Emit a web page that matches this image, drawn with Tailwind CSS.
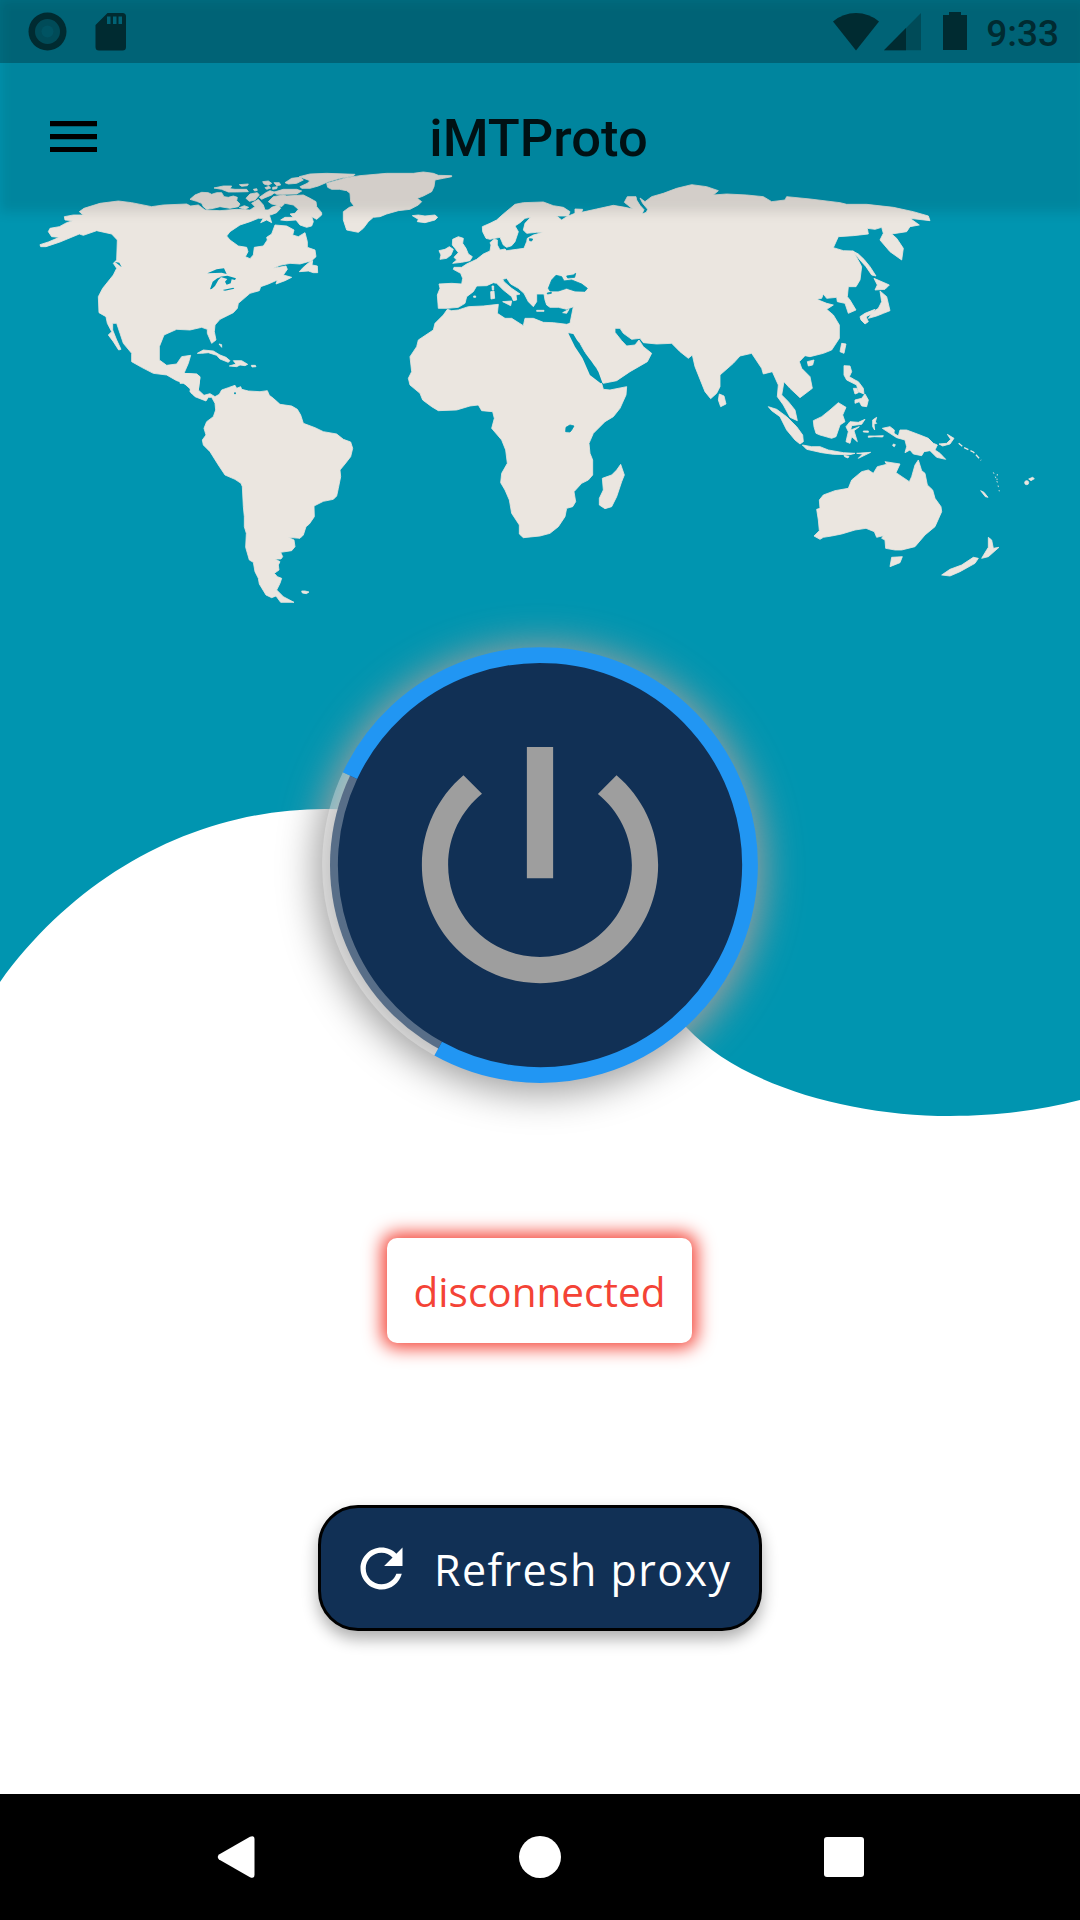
<!DOCTYPE html>
<html lang="en">
<head>
<meta charset="utf-8">
<title>iMTProto</title>
<script src="https://cdn.jsdelivr.net/npm/@tailwindcss/browser@4"></script>
</head>
<body>
<div class="relative isolate flex h-[1920px] w-[1080px] flex-col overflow-hidden bg-white">

  <!-- Backdrop: teal wave and world map -->
  <svg class="absolute inset-0 -z-10" width="1080" height="1920" viewBox="0 0 1080 1920">
    <path fill="#0095b0" d="M0 0H1080V1100C1040 1110 1000 1116 950 1116C850 1116 740 1085 687 1028C560 890 520 809 325 809C200 809 80 871 0 982Z"/>
    <g fill="#ebe6e0" stroke="#ebe6e0" stroke-width="2.500" stroke-linejoin="round">
      <!-- North America -->
      <g transform="translate(20 160) scale(.33333)">
        <path d="M60 254L85 246 118 232 95 230 85 215 90 205 118 200 140 188 158 182 135 180 133 170 160 165 190 165 178 155 192 145 240 130 295 123 335 128 395 140 430 135 500 132 512 138 535 135 555 150 600 152 650 148 690 150 705 140 695 130 715 118 730 135 735 150 755 150 748 165 755 188 740 180 722 188 730 175 715 175 690 185 660 195 630 215 620 228 630 240 655 258 680 262 684 275 676 290 690 296 700 285 703 262 730 258 742 240 740 232 755 222 765 195 800 198 822 210 818 225 835 230 855 218 862 245 862 262 885 270 888 290 875 302 840 312 810 310 780 316 760 325 798 318 802 328 790 345 815 352 795 362 768 372 772 360 745 372 722 380 718 392 690 400 655 430 652 445 640 458 600 478 585 495 583 515 588 540 575 550 562 520 562 508 545 502 510 510 470 508 432 525 418 560 418 600 440 616 470 612 485 590 512 586 505 610 492 640 530 643 540 652 535 690 515 700 512 688 490 668 470 662 440 645 400 640 365 622 335 605 335 580 310 550 300 520 290 490 278 490 278 510 290 540 303 568 296 570 280 545 265 525 275 515 262 490 258 470 237 458 235 410 248 385 280 345 290 325 280 310 290 300 292 240 275 222 230 212 190 226 178 222 120 246 78 260 62 260Z"/>
        <path d="M510 118L525 105 545 97 565 98 575 103 590 98 605 98 612 110 625 112 640 108 652 112 650 122 660 132 655 140 630 145 600 140 580 145 560 148 550 140 545 130 530 124Z"/>
        <path d="M582 84L610 78 635 78 630 86 645 88 680 88 685 95 650 96 625 96 605 88ZM658 74L685 72 682 77 665 79ZM678 115L690 102 712 98 718 105 705 120 688 124ZM728 65L745 63 755 70 745 76 732 72ZM762 68L778 68 782 75 770 77ZM700 88l10-2 2 5-8 2ZM735 83l12-4 5 5-12 4ZM758 82l14-2-2 6-12 2ZM718 112L738 98 750 92 765 97 755 105 735 113 725 118Z"/>
        <path d="M795 68L815 55 840 52 850 60 830 70 805 72ZM760 97L790 88 830 88 845 93 830 102 790 103 770 103ZM838 50L870 42 920 40 1005 43 1000 48 960 55 925 65 895 78 870 85 845 85 840 80 862 70 870 62Z"/>
        <path d="M745 125L760 110 790 105 800 108 850 105 870 115 888 125 890 140 905 158 905 165 890 178 875 170 880 185 875 198 860 202 840 195 828 180 800 182 782 180 795 172 820 172 810 162 825 160 835 148 820 135 795 130 785 140 770 135 755 132ZM740 155L755 142 775 135 782 145 770 158 752 165ZM658 143l15-6 13 5-10 6Z"/>
        <path d="M838 335L850 322 870 305 878 302 876 315 892 318 893 338 880 338 865 333Z"/>
        <path d="M532 580L550 570 580 573 600 585 618 592 630 602 625 607 600 597 590 586 565 578 545 580ZM640 602L665 602 683 613 675 617 660 615 650 620 628 618 648 612ZM694 616l12 0 2 4-12 1ZM597 552l8 2 0 8Z"/>
        <path fill="#0095b0" stroke="none" d="M562 340L590 328 612 325 620 342 605 338ZM570 388L578 365 592 355 605 350 595 360 585 378 575 387ZM600 350L622 347 648 355 645 360 635 358 632 370 620 374 615 365 622 357ZM608 390L640 383 643 386 615 392ZM285 306L298 308 305 322 296 314Z"/>
      </g>
      <!-- Greenland and Iceland -->
      <g transform="translate(180 160) scale(.33333)">
        <path d="M440 70L500 53 540 47 620 40 700 40 730 36 760 40 775 46 815 47 815 50 790 55 765 60 762 80 755 95 730 108 712 115 725 125 715 135 690 148 655 152 620 162 600 170 580 172 565 185 550 205 535 217 500 210 490 180 490 155 508 142 522 138 512 125 510 100 500 92 478 88 455 88 443 82ZM697 167L715 165 735 168 765 165 773 172 765 180 735 188 712 185 715 178Z"/>
      </g>
      <!-- South America -->
      <g transform="translate(180 360) scale(.33333)">
        <path d="M105 110L118 103 125 90 145 83 165 76 170 85 182 80 185 88 205 93 240 95 262 92 268 106 280 115 300 133 335 138 352 148 362 165 370 190 405 203 430 215 470 222 490 238 512 246 518 265 512 290 495 312 480 330 482 350 475 385 470 408 460 418 430 424 402 438 403 470 388 492 378 500 370 525 360 535 325 532 342 540 345 560 335 572 302 577 308 590 303 597 285 597 300 605 295 615 297 630 283 640 292 650 305 655 300 670 290 690 310 710 342 727 302 727 288 708 275 713 258 705 238 672 235 655 225 635 220 607 208 600 197 562 199 520 193 500 193 470 190 440 187 380 183 370 165 358 135 345 115 315 90 275 70 255 67 240 78 225 72 205 80 185 100 170 107 150 105 130 95 112 85 112 78 123 45 110 30 95 32 80 10 70 0 70V40L50 42 60 50 55 90 72 106 90 101ZM365 693l10 0 12 3-8 5-12-2Z"/>
        <circle cx="165" cy="100" r="3" fill="#0095b0" stroke="none"/>
      </g>
      <!-- Asia and northern Europe -->
      <g transform="translate(560 170) scale(.33333)">
        <path d="M-365 415L-368 375 -360 355 -363 342 -325 340 -295 342 -292 325 -298 310 -320 298 -318 292 -295 292 -280 282 -250 268 -230 252 -210 243 -207 225 -210 218 -198 208 -188 210 -188 225 -180 240 -165 237 -160 242 -130 238 -108 235 -100 215 -98 205 -80 195 -50 187 -70 187 -100 190 -110 180 -105 160 -88 142 -105 145 -120 158 -135 168 -125 185 -135 215 -145 227 -160 232 -170 225 -180 202 -210 208 -222 205 -232 185 -233 170 -210 160 -190 150 -170 132 -135 103 -110 98 -50 96 -20 107 10 112 30 125 25 138 -10 138 5 150 20 140 45 130 45 117 68 118 65 127 110 117 160 106 195 112 218 117 193 97 202 80 228 80 230 90 240 106 252 119 246 132 259 127 263 118 248 100 240 84 255 95 275 80 310 70 350 55 395 44 440 50 475 62 460 75 500 72 560 75 610 80 635 95 675 90 680 80 750 87 840 98 860 103 920 103 1000 112 1060 125 1105 138 1110 152 1050 145 1078 165 1050 170 1040 185 995 192 1010 205 1030 235 1025 270 990 245 960 210 970 190 965 172 945 178 922 175 925 192 880 197 835 200 820 233 850 242 880 243 890 262 905 290 900 330 888 350 865 350 862 380 870 390 888 420 865 430 855 400 832 395 830 382 800 385 790 372 785 385 770 388 800 400 820 405 800 418 820 435 838 465 838 505 815 540 790 550 750 560 735 557 718 575 725 595 750 620 757 655 720 683 690 655 672 635 665 675 685 695 705 720 712 752 690 742 670 705 652 680 655 645 637 605 610 612 605 595 575 550 540 558 520 580 480 615 480 650 470 670 452 686 435 665 405 590 397 555 385 565 360 545 335 520 290 522 250 518 240 505 215 508 190 490 180 475 165 475 165 487 185 512 200 528 225 525 237 510 250 530 275 550 262 575 210 605 170 632 130 640 125 635 110 595 85 565 60 520 35 493 25 487 30 460 40 410 20 418 -5 412 -30 412 -40 405 -45 390 -48 372 -70 372 -70 395 -80 410 -95 395 -108 370 -125 355 -148 342 -160 325 -172 328 -168 335 -145 355 -120 372 -132 375 -130 390 -140 392 -145 380 -170 360 -190 340 -200 338 -220 347 -250 348 -260 365 -280 380 -285 400 -305 412 -338 415Z"/>
        <path d="M878 243L895 252 912 268 930 290 948 318 935 315 918 290 900 270ZM942 325L988 345 975 358 945 360 952 345ZM960 363L980 380 990 422 970 430 950 438 925 445 940 425 955 415 965 395ZM900 440L915 430 945 418 935 432 918 440 925 455 915 462 903 450ZM845 520L858 522 852 550 840 545ZM742 575L762 570 758 585 745 588ZM852 587L870 588 875 605 868 620 885 630 895 635 910 655 912 672 895 665 890 645 860 630 852 615ZM880 655L890 655 895 668 885 672ZM885 690L905 685 915 672 925 690 920 710 905 708 898 695 885 700ZM478 672L492 678 498 702 482 710 475 690Z"/>
      </g>
      <!-- Africa, British Isles, Mediterranean -->
      <g transform="translate(390 180) scale(.33333)">
        <path d="M172 388L185 392 205 390 235 380 280 378 325 373 322 400 345 415 365 415 400 437 405 415 430 415 460 427 490 428 530 433 540 430 555 440 535 457 555 490 578 535 600 585 635 610 640 628 660 630 710 620 708 645 690 685 670 710 645 725 610 760 597 790 600 820 608 840 608 885 595 900 575 910 552 935 557 965 548 980 530 985 525 1010 505 1040 480 1060 450 1068 400 1073 388 1062 388 1035 365 1000 358 960 345 930 332 908 335 880 352 850 347 810 335 780 305 745 313 715 308 695 275 692 265 675 240 678 200 690 145 692 125 680 98 660 90 640 60 615 55 595 65 575 60 530 80 500 85 480 130 450 135 430 160 405Z"/>
        <path d="M692 853L703 885 695 905 680 950 665 980 645 986 628 975 628 955 640 930 637 895 665 885 680 870Z"/>
        <path d="M188 250L200 240 192 232 205 218 195 205 187 195 188 178 205 170 220 175 218 190 228 205 235 222 247 230 240 242 215 247ZM147 212L165 208 178 200 190 208 183 225 170 235 150 238 153 225Z"/>
        <path d="M338 365L365 363 362 377ZM440 391H462V394H440ZM518 398L537 388 530 400ZM302 335L312 333 314 355 303 357ZM306 318h5v12h-4ZM251 348h6v4h-6Z"/>
        <g fill="#0095b0" stroke="#0095b0">
          <path d="M475 325L485 300 498 286 515 290 522 303 545 300 575 312 592 325 585 334 555 333 530 325 505 333 480 333ZM530 288L550 285 557 280 554 292 533 294ZM472 339l12-2v3l-12 2ZM418 176l10 1-3 6-6-1ZM527 755L528 742 540 735 552 738 545 750 540 756Z"/>
          <path stroke="none" d="M535 460L550 462 578 510 605 545 625 575 637 608 632 610 600 585 578 535 555 500Z"/>
        </g>
      </g>
      <!-- South-east Asia and Oceania -->
      <g transform="translate(740 300) scale(.33333)">
        <path d="M85 320L110 328 140 350 170 380 188 405 190 425 180 432 165 420 140 390 120 350 95 332ZM187 435L215 440 240 440 265 450 310 458 345 460 330 464 280 463 245 458 200 448ZM350 460L392 457 355 475 368 462ZM312 466l15 3-3 5-10-4ZM220 362L245 350 270 330 295 308 318 322 308 345 315 365 300 375 288 410 275 415 240 405 228 400 222 380ZM318 380L330 365 355 367 375 358 365 373 335 377 332 390 358 380 342 392 352 425 335 410 330 430 318 425 325 395ZM398 360l12-8-4 14 4 4-8 2 2 18-6-10ZM370 393h15v4l-15-1ZM385 408h20l25-1-2 4-25-1-18 2Z"/>
        <path d="M427 385L450 380 463 390 462 400 475 408 480 390 500 390 540 405 565 415 580 430 592 435 585 450 600 460 617 478 590 472 570 452 552 455 545 467 520 462 510 450 495 458 500 440 495 420 470 413 450 400ZM597 432L620 430 632 418 622 403 642 415 630 432 608 438ZM460 432l6 2-3 6-5-3Z"/>
        <path d="M222 708L238 692 235 660 230 628 240 625 238 600 250 585 285 572 325 565 335 540 365 515 385 510 400 520 412 500 440 493 435 485 480 492 468 518 508 545 515 530 525 495 535 480 545 512 555 520 562 555 578 570 585 595 603 620 605 635 585 680 555 705 525 740 485 750 465 750 437 745 435 720 425 715 430 707 410 712 403 695 378 685 345 690 305 702 275 708 250 712 240 718ZM455 772L487 770 480 788 450 800Z"/>
        <path d="M605 825L630 808 665 795 700 772 715 775 705 790 660 815 630 828ZM745 712L755 720 760 745 777 742 745 770 725 775 735 758 745 742ZM722 572l10 5 12 15-8-2ZM866 537l12-5 5 4-10 6Z"/>
        <path fill="none" stroke-width="4" stroke-dasharray="14 7" d="M656 430L672 443 700 456 723 481"/>
        <path fill="none" stroke-dasharray="5 9" d="M760 517L766 530 773 550 778 574M772 522L771 540"/>
        <circle cx="860" cy="548" r="6"/>
      </g>
    </g>
  </svg>

  <!-- Soft shade cast by the transparent app bar -->
  <div class="absolute top-0 left-0 -z-10 h-[212px] w-[1088px] bg-black/10 blur-[6px]"></div>

  <!-- Status bar -->
  <header class="flex h-[63px] w-full shrink-0 items-start bg-black/25 pr-[21px] pl-7 text-[#002b31]">
    <svg class="mt-3" width="100" height="40" viewBox="27.500 12 100 40">
      <circle cx="47" cy="31.500" r="19" fill="#002b31"/>
      <circle cx="47" cy="31.500" r="12.500" fill="#004b58"/>
      <circle cx="47" cy="31.500" r="6" fill="#005362"/>
      <path fill="#002b31" fill-rule="evenodd" d="M107 13H122Q125.500 13 125.500 16.500V47Q125.500 50.500 122 50.500H98.500Q95 50.500 95 47V25ZM106.500 16.500V24H110V16.500ZM112.500 16.500V24H116V16.500ZM118 16.500V24H121.500V16.500Z"/>
    </svg>
    <svg class="mt-3 ml-auto" width="140" height="40" viewBox="830 12 140 40">
      <g fill="#002b31">
        <path d="M833 21.500Q843 13 856 13T879 21.500L856 50.500Z"/>
        <path fill="#004b58" d="M921 13V50.200H884Z"/>
        <path d="M906 28V50.200H884Z"/>
        <path d="M949 12H961V15H967V50H943V15H949Z"/>
      </g>
    </svg>
    <span class="mt-[15px] ml-4 font-[Roboto] text-[37px] leading-[38px] font-medium">9:33</span>
  </header>

  <!-- App bar -->
  <nav class="relative flex h-[147px] w-full shrink-0 items-center justify-center">
    <svg class="absolute top-[58px] left-[50px]" width="47" height="31" viewBox="0 0 47 31"><path d="M0 0H47V5.200H0ZM0 13H47V18.200H0ZM0 26H47V31H0Z"/></svg>
    <h1 class="mt-[3px] mr-[3px] font-[Roboto] text-[52.500px] leading-[62px] font-medium text-black/87">iMTProto</h1>
  </nav>

  <main class="flex flex-1 flex-col items-center">
    <!-- Power button -->
    <button class="mt-[445px] size-[420px] shrink-0 rounded-full bg-[#113055] shadow-[0_4px_38px_14px_#9e9e9e]">
      <svg class="size-[420px] overflow-visible" viewBox="330 656 420 420">
        <path fill="none" stroke="#ffffff" stroke-opacity=".3" stroke-width="15.750" d="M438.200 1049.700A210 210 0 0 1 350 776.600"/>
        <path fill="none" stroke="#2196f3" stroke-width="15.750" d="M350 776.600A210 210 0 1 1 438.200 1049.700"/>
        <path fill="#9e9e9e" transform="translate(382.500 708.500) scale(13.125)" d="M13 3h-2v10h2V3zm4.830 2.170l-1.420 1.420C17.990 7.860 19 9.810 19 12c0 3.870-3.130 7-7 7s-7-3.130-7-7c0-2.190 1.010-4.140 2.580-5.420L6.170 5.170C4.230 6.820 3 9.260 3 12c0 4.970 4.030 9 9 9s9-4.030 9-9c0-2.740-1.230-5.180-3.170-6.830z"/>
      </svg>
    </button>

    <!-- Connection state -->
    <div class="mt-[163px] mr-px flex h-[105px] w-[305px] shrink-0 items-center justify-center rounded-[10px] bg-white pt-[4px] font-['Open_Sans'] text-[40.500px] text-[#f44336] shadow-[0_0_18px_5px_#f44336]">disconnected</div>

    <!-- Refresh action -->
    <button class="mt-[162px] flex h-[126px] w-[444px] shrink-0 items-center rounded-[40px] border-[3px] border-black bg-[#113055] pl-[29px] text-white shadow-[0_8px_16px_rgba(0,0,0,0.32)]">
      <svg class="size-[63px] shrink-0" viewBox="0 0 24 24" fill="currentColor"><path d="M17.650 6.350C16.200 4.900 14.210 4 12 4c-4.420 0-7.990 3.580-7.990 8s3.570 8 7.990 8c3.730 0 6.840-2.550 7.730-6h-2.080c-.82 2.330-3.040 4-5.650 4-3.310 0-6-2.690-6-6s2.690-6 6-6c1.660 0 3.140.69 4.220 1.780L13 11h7V4l-2.350 2.350z"/></svg>
      <span class="mt-1 ml-[21px] font-['Open_Sans'] text-[43px] tracking-[1.450px] whitespace-nowrap">Refresh proxy</span>
    </button>
  </main>

  <!-- System navigation -->
  <footer class="flex h-[126px] w-full shrink-0 items-center bg-black pr-[216px] pl-[217px]">
    <svg width="38" height="42" viewBox="0 0 38 42"><path fill="#fff" d="M2 18.500L33 .8Q37.500-1 37.500 3.500V38.500Q37.500 43 33 41.200L2 23.500Q-.5 21 2 18.500Z"/></svg>
    <span class="ml-[264px] size-[42px] rounded-full bg-white"></span>
    <span class="ml-auto size-10 rounded-[3px] bg-white"></span>
  </footer>
</div>
</body>
</html>
